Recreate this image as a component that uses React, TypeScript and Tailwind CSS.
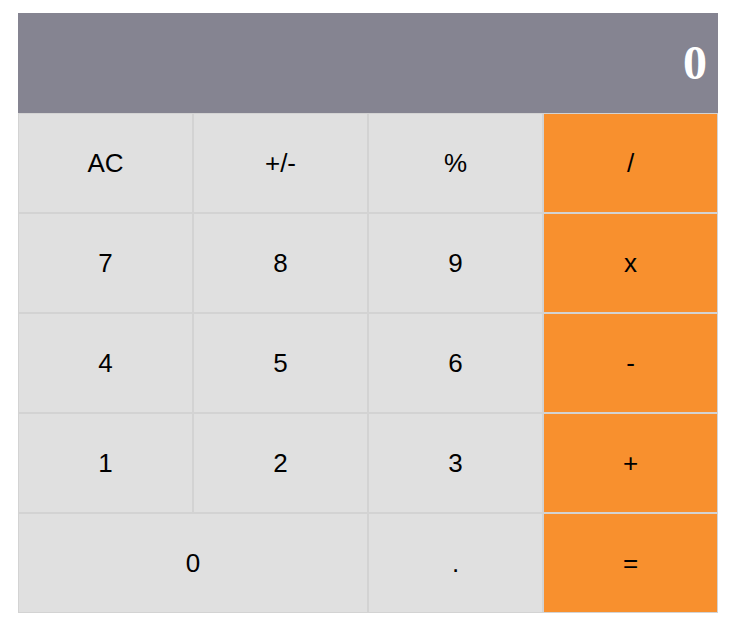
const KEYS: { label: string; op?: boolean; wide?: boolean }[] = [
  { label: 'AC' },
  { label: '+/-' },
  { label: '%' },
  { label: '/', op: true },
  { label: '7' },
  { label: '8' },
  { label: '9' },
  { label: 'x', op: true },
  { label: '4' },
  { label: '5' },
  { label: '6' },
  { label: '-', op: true },
  { label: '1' },
  { label: '2' },
  { label: '3' },
  { label: '+', op: true },
  { label: '0', wide: true },
  { label: '.' },
  { label: '=', op: true },
]

export default function App() {
  return (
    <div className="min-h-screen bg-white pt-[13px] pl-[18px]">
      <div className="w-[700px]">
        {/* Display */}
        <div className="h-[100px] bg-[#858491] flex items-center justify-end pr-[11px]">
          <span className="text-white text-[48px] font-bold font-['Liberation_Serif',serif] leading-none">
            0
          </span>
        </div>

        {/* Keypad */}
        <div className="grid grid-cols-4">
          {KEYS.map((k) => (
            <button
              key={k.label}
              className={`h-[100px] border border-[#d3d3d3] flex items-center justify-center text-[26px] text-black font-['Liberation_Sans',Arial,sans-serif] ${
                k.op ? 'bg-[#f8902e]' : 'bg-[#e0e0e0]'
              } ${k.wide ? 'col-span-2' : ''}`}
            >
              {k.label}
            </button>
          ))}
        </div>
      </div>
    </div>
  )
}
